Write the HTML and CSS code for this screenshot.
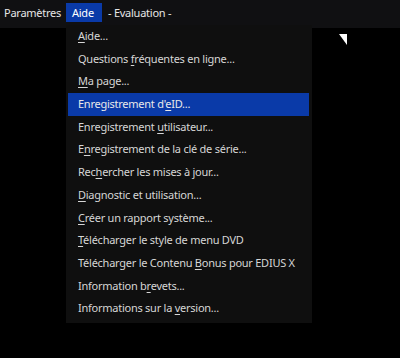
FILE: index.html
```html
<!DOCTYPE html>
<html lang="fr">
<head>
<meta charset="utf-8">
<title>Aide</title>
<link rel="stylesheet" href="styles.css">
</head>
<body>
<div class="menubar">
  <span class="mb-item">Paramètres</span>
  <span class="mb-item active">Aide</span>
  <span class="mb-item title">- Evaluation -</span>
</div>
<div class="workspace">
  <ul class="dropdown">
    <li><u>A</u>ide...</li>
    <li>Questions <u>f</u>réquentes en ligne...</li>
    <li><u>M</u>a page...</li>
    <li class="hl">Enregistrement d'<u>e</u>ID...</li>
    <li>Enregistrement <u>u</u>tilisateur...</li>
    <li>E<u>n</u>registrement de la clé de série...</li>
    <li>Rec<u>h</u>ercher les mises à jour...</li>
    <li><u>D</u>iagnostic et utilisation...</li>
    <li><u>C</u>réer un rapport système...</li>
    <li><u>T</u>élécharger le style de menu DVD</li>
    <li>Télécharger le Contenu <u>B</u>onus pour EDIUS X</li>
    <li>Information b<u>r</u>evets...</li>
    <li>Informations sur la <u>v</u>ersion...</li>
  </ul>
  <svg class="corner" width="8" height="11" viewBox="0 0 8 11"><polygon points="0,0 8,0 8,11" fill="#fff"/></svg>
</div>
</body>
</html>
```
FILE: styles.css
```css
html, body {
  margin: 0;
  padding: 0;
  background: #000;
  width: 400px;
  height: 358px;
  overflow: hidden;
  font-family: "Noto Sans", "Open Sans", sans-serif;
  font-size: 11px;
  letter-spacing: -0.25px;
}
.menubar {
  height: 28px;
  background: #101012;
  display: flex;
  align-items: center;
}
.mb-item {
  color: #e6e6e6;
  height: 19px;
  line-height: 19px;
  margin-top: -4px;
}
.mb-item:first-child {
  padding-left: 4px;
  width: 62px;
}
.mb-item.active {
  background: #0a3aa8;
  color: #fff;
  width: 36px;
  box-sizing: border-box;
  padding-left: 6px;
}
.mb-item.title {
  padding-left: 6px;
}
.workspace {
  position: relative;
  height: 330px;
}
.dropdown {
  list-style: none;
  margin: 0 0 0 66px;
  padding: 0 3px 3px 2px;
  width: 241px;
  background: #0f0f0f;
  position: relative;
  top: -3px;
}
.dropdown li {
  height: 22.7px;
  line-height: 22.7px;
  padding-left: 10px;
  color: #d6d6d6;
  white-space: nowrap;
}
.dropdown li.hl {
  background: #0a3aa8;
  color: #e8e8e8;
}
.dropdown u {
  text-underline-offset: 2px;
}
.corner {
  position: absolute;
  left: 339px;
  top: 6px;
}
```
